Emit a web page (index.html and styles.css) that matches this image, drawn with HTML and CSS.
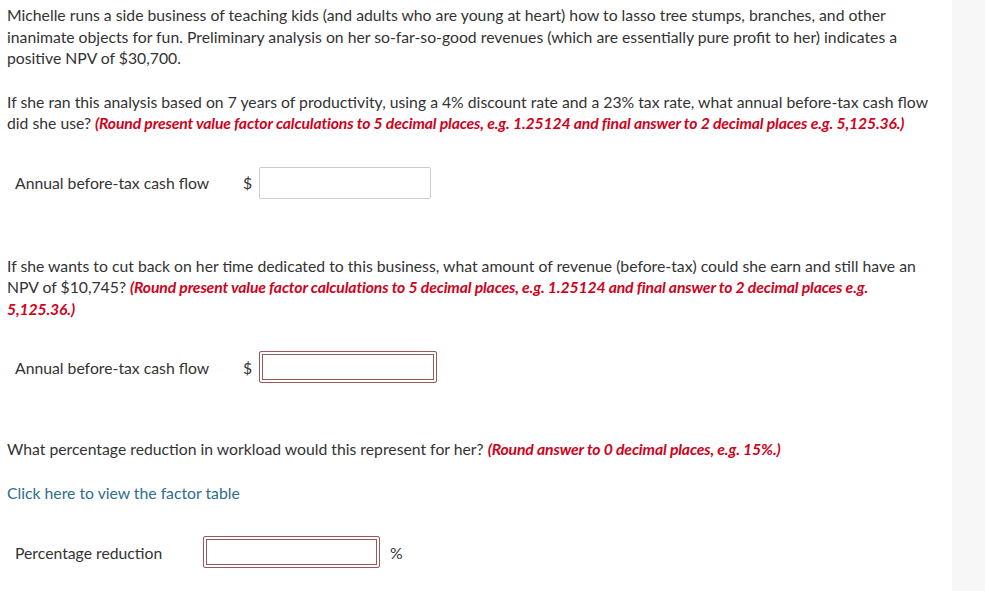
FILE: index.html
```html
<!DOCTYPE html>
<html>
<head>
<meta charset="utf-8">
<link rel="stylesheet" href="styles.css">
</head>
<body>
<div class="page">
  <main class="main">
    <p class="p p1">Michelle runs a side business of teaching kids (and adults who are young at heart) how to lasso tree stumps, branches, and other inanimate objects for fun. Preliminary analysis on her so-far-so-good revenues (which are essentially pure profit to her) indicates a positive NPV of $30,700.</p>
    <p class="p p2">If she ran this analysis based on 7 years of productivity, using a 4% discount rate and a 23% tax rate, what annual before-tax cash flow did she use? <em class="hint">(Round present value factor calculations to 5 decimal places, e.g. 1.25124 and final answer to 2 decimal places e.g. 5,125.36.)</em></p>
    <div class="row row1">
      <span class="label label-wide">Annual before-tax cash flow</span>
      <span class="unit">$</span>
      <span class="field field-plain"></span>
    </div>
    <p class="p p3">If she wants to cut back on her time dedicated to this business, what amount of revenue (before-tax) could she earn and still have an NPV of $10,745? <em class="hint">(Round present value factor calculations to 5 decimal places, e.g. 1.25124 and final answer to 2 decimal places e.g. 5,125.36.)</em></p>
    <div class="row row2">
      <span class="label label-wide">Annual before-tax cash flow</span>
      <span class="unit">$</span>
      <span class="field field-error field-a"></span>
    </div>
    <p class="p p4">What percentage reduction in workload would this represent for her? <em class="hint">(Round answer to 0 decimal places, e.g. 15%.)</em></p>
    <p class="p p5"><a class="link" href="#">Click here to view the factor table</a></p>
    <div class="row row3">
      <span class="label label-narrow">Percentage reduction</span>
      <span class="field field-error field-b"></span>
      <span class="unit unit-after">%</span>
    </div>
  </main>
  <aside class="side"></aside>
</div>
</body>
</html>
```
FILE: styles.css
```css
html, body {
  margin: 0;
  padding: 0;
  background: #ffffff;
}
body {
  font-family: Lato, "Open Sans", sans-serif;
  font-size: 15.75px;
  color: #333333;
}
.page {
  display: flex;
  min-height: 591px;
}
.main {
  width: 932px;
  padding: 4px 13px 0 7px;
  flex: none;
}
.side {
  flex: 1;
  background: #f7f7f7;
}
.p {
  margin: 0;
  line-height: 21.5px;
}
.p2 { margin-top: 22px; }
.p3 { margin-top: 56px; }
.p4 { margin-top: 55px; }
.p5 { margin-top: 22px; }
.hint {
  color: #d0021b;
  font-weight: bold;
  font-style: italic;
  letter-spacing: -0.15px;
}
.link {
  color: #2e6d8e;
  text-decoration: none;
}
.row {
  display: flex;
  align-items: center;
  padding-left: 8px;
}
.row1 { margin-top: 33px; height: 32px; }
.row2 { margin-top: 32px; height: 32px; }
.row3 { margin-top: 33px; height: 32px; }
.label-wide { width: 228px; flex: none; }
.label-narrow { width: 188px; flex: none; }
.unit { width: 16px; flex: none; }
.unit-after { margin-left: 10px; }
.field {
  display: block;
  box-sizing: border-box;
  height: 32px;
  background: #fff;
}
.field-plain {
  width: 172px;
  border: 1px solid #cccccc;
  border-radius: 2px;
}
.field-error {
  border: 1px solid #9a5a5a;
  border-radius: 2px;
  box-shadow: inset 0 0 0 2px #ffffff, inset 0 0 0 3px #9a5a5a;
}
.field-a { width: 178px; }
.field-b { width: 177px; }
```
